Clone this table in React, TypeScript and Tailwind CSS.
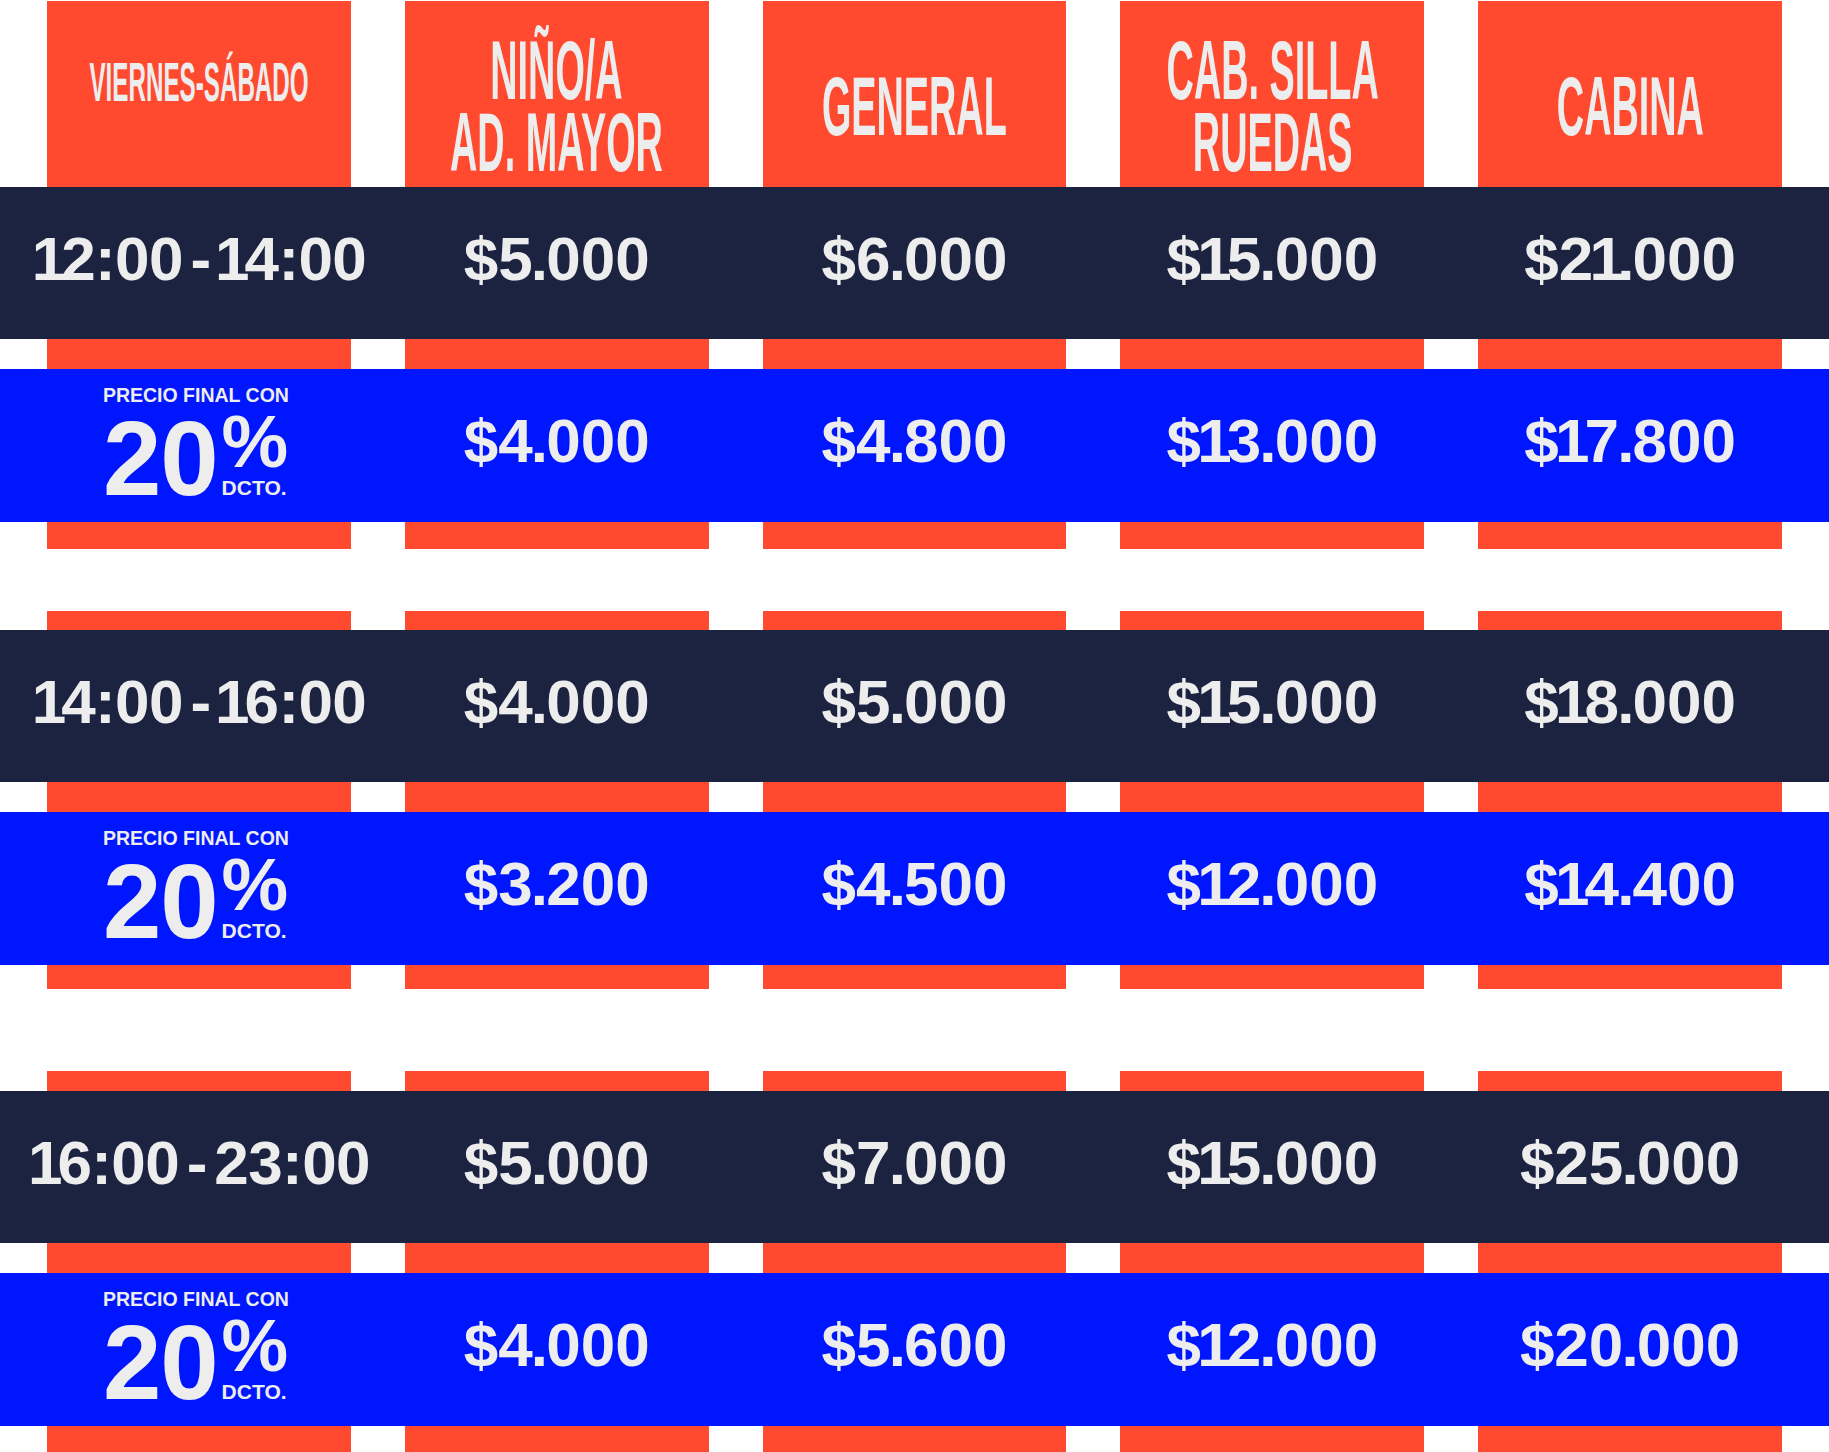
const ORANGE = 'bg-[#ff4a2f]';

type Group = {
  time: string;
  prices: string[];
  discounted: string[];
};

const headers = ['NIÑO/A\nAD. MAYOR', 'GENERAL', 'CAB. SILLA\nRUEDAS', 'CABINA'];

const groups: Group[] = [
  {
    time: '12:00 - 14:00',
    prices: ['$5.000', '$6.000', '$15.000', '$21.000'],
    discounted: ['$4.000', '$4.800', '$13.000', '$17.800']
  },
  {
    time: '14:00 - 16:00',
    prices: ['$4.000', '$5.000', '$15.000', '$18.000'],
    discounted: ['$3.200', '$4.500', '$12.000', '$14.400']
  },
  {
    time: '16:00 - 23:00',
    prices: ['$5.000', '$7.000', '$15.000', '$25.000'],
    discounted: ['$4.000', '$5.600', '$12.000', '$20.000']
  }
];

const grid = 'grid grid-cols-5 gap-x-[54px] px-[47px]';

// the original face has a narrow "1" and a tight "." — close up the spacing around them
function kern(ch: string, next: string | undefined) {
  if (ch === '1' && next === '.') return 'tracking-[-0.11em]';
  if (ch === '1') return 'tracking-[-0.08em]';
  if (next === '1') return 'tracking-[-0.06em]';
  if (ch === '.' || next === '.') return 'tracking-[-0.03em]';
  return '';
}

function Num({ value }: { value: string }) {
  const chars = value.split('');
  return (
    <>
      {chars.map((ch, i) => (
        <span key={i} className={kern(ch, chars[i + 1])}>
          {ch}
        </span>
      ))}
    </>
  );
}

function OrangeRow({ className }: { className: string }) {
  return (
    <div className={grid}>
      {[0, 1, 2, 3, 4].map((i) => (
        <div key={i} className={`${ORANGE} ${className}`} />
      ))}
    </div>
  );
}

function Price({ value }: { value: string }) {
  return (
    <div className="flex justify-center">
      <span className="whitespace-nowrap text-[62px] font-bold leading-none">
        <Num value={value} />
      </span>
    </div>
  );
}

function DarkBar({ group }: { group: Group }) {
  return (
    <div className={`${grid} h-[152px] items-center bg-[#1c2340] pb-[9px] text-[#ededed]`}>
      <div className="flex justify-center">
        <span className="whitespace-nowrap text-[62px] font-bold leading-none tracking-[-0.01em] [word-spacing:-9px]">
          <Num value={group.time} />
        </span>
      </div>
      {group.prices.map((p) => (
        <Price key={p} value={p} />
      ))}
    </div>
  );
}

function DiscountBadge() {
  return (
    <div className="mr-[6px] flex flex-col items-start">
      <span className="whitespace-nowrap text-[19.5px] font-bold leading-none">PRECIO FINAL CON</span>
      <div className="flex">
        <span className="text-[105px] font-bold leading-none tracking-[-0.01em]">20</span>
        <div className="ml-[4px] flex flex-col items-start justify-between pb-[13px]">
          <span className="text-[75px] font-bold leading-[70px]">%</span>
          <span className="text-[21px] font-bold leading-none">DCTO.</span>
        </div>
      </div>
    </div>
  );
}

function BlueBar({ group }: { group: Group }) {
  return (
    <div className={`${grid} h-[153px] items-center bg-[#0016ff] pb-[9px] text-[#ededed]`}>
      <div className="flex justify-center self-start pt-[17px]">
        <DiscountBadge />
      </div>
      {group.discounted.map((p) => (
        <Price key={p} value={p} />
      ))}
    </div>
  );
}

function Header() {
  return (
    <div className={grid}>
      <div className={`${ORANGE} flex h-[186px] items-center justify-center pt-[24px]`}>
        <span className="mb-[47px] inline-block scale-x-[0.44] whitespace-nowrap text-[55px] font-bold leading-none">
          VIERNES-SÁBADO
        </span>
      </div>
      {headers.map((h) => (
        <div key={h} className={`${ORANGE} flex h-[186px] items-center justify-center pt-[24px]`}>
          <span className="inline-block scale-x-[0.45] whitespace-pre text-center text-[84px] font-bold leading-[72px]">
            {h}
          </span>
        </div>
      ))}
    </div>
  );
}

export default function App() {
  return (
    <div className="w-[1829px] overflow-hidden bg-white pt-px pb-px font-['Liberation_Sans',Arial,sans-serif] text-[#ededed]">
      <Header />
      <DarkBar group={groups[0]} />
      <OrangeRow className="h-[30px]" />
      <BlueBar group={groups[0]} />
      <OrangeRow className="h-[27px]" />

      <div className="h-[62px]" />
      <OrangeRow className="h-[19px]" />
      <DarkBar group={groups[1]} />
      <OrangeRow className="h-[30px]" />
      <BlueBar group={groups[1]} />
      <OrangeRow className="h-[24px]" />

      <div className="h-[82px]" />
      <OrangeRow className="h-[20px]" />
      <DarkBar group={groups[2]} />
      <OrangeRow className="h-[30px]" />
      <BlueBar group={groups[2]} />
      <OrangeRow className="h-[26px]" />
    </div>
  );
}
